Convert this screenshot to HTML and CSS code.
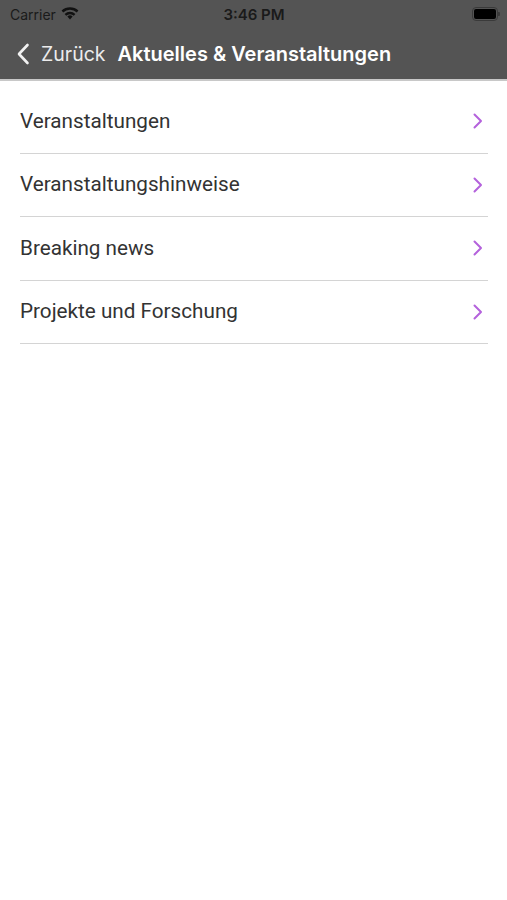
FILE: index.html
```html
<!DOCTYPE html>
<html lang="de">
<head>
  <meta charset="UTF-8">
  <title>Aktuelles &amp; Veranstaltungen</title>
  <link rel="stylesheet" href="styles.css">
</head>
<body>
  <header class="topbar">
    <!-- Statusleiste -->
    <div class="status">
      <div class="status-left">
        <span>Carrier</span>
        <svg class="wifi" width="18" height="13" viewBox="0 0 18 13">
          <path d="M9 12.5l2.6-3.1a4 4 0 0 0-5.2 0z" fill="#111"/>
          <path d="M3.6 6.9a8 8 0 0 1 10.8 0l-1.6 1.9a5.5 5.5 0 0 0-7.6 0z" fill="#111"/>
          <path d="M0.6 3.5a12.5 12.5 0 0 1 16.8 0l-1.6 1.9a10 10 0 0 0-13.6 0z" fill="#111"/>
        </svg>
      </div>
      <div class="status-time">3:46 PM</div>
      <div class="status-right">
        <span class="battery"><span class="battery-level"></span></span>
      </div>
    </div>

    <!-- Navigation -->
    <nav class="navbar">
      <a class="back" href="#">
        <svg width="14" height="22" viewBox="0 0 14 22">
          <path d="M11.5 2L3 11l8.5 9" fill="none" stroke="#f2f2f2" stroke-width="2.6" stroke-linecap="round" stroke-linejoin="round"/>
        </svg>
        <span>Zurück</span>
      </a>
      <h1 class="title">Aktuelles &amp; Veranstaltungen</h1>
    </nav>
  </header>

  <ul class="menu">
    <li><span>Veranstaltungen</span><svg class="chevron" width="10" height="16" viewBox="0 0 10 16"><path d="M1.5 1.5L8 8l-6.5 6.5" fill="none" stroke="#b462dc" stroke-width="2" stroke-linecap="round" stroke-linejoin="round"/></svg></li>
    <li><span>Veranstaltungshinweise</span><svg class="chevron" width="10" height="16" viewBox="0 0 10 16"><path d="M1.5 1.5L8 8l-6.5 6.5" fill="none" stroke="#b462dc" stroke-width="2" stroke-linecap="round" stroke-linejoin="round"/></svg></li>
    <li><span>Breaking news</span><svg class="chevron" width="10" height="16" viewBox="0 0 10 16"><path d="M1.5 1.5L8 8l-6.5 6.5" fill="none" stroke="#b462dc" stroke-width="2" stroke-linecap="round" stroke-linejoin="round"/></svg></li>
    <li><span>Projekte und Forschung</span><svg class="chevron" width="10" height="16" viewBox="0 0 10 16"><path d="M1.5 1.5L8 8l-6.5 6.5" fill="none" stroke="#b462dc" stroke-width="2" stroke-linecap="round" stroke-linejoin="round"/></svg></li>
  </ul>
</body>
</html>
```

FILE: styles.css
```css
body {
  margin: 0;
  font-family: Roboto, "Liberation Sans", sans-serif;
  background: #fff;
}

.topbar {
  background-color: #545454;
  border-bottom: 2px solid #c8c8c8;
}

.status {
  height: 28px;
  display: flex;
  align-items: center;
  justify-content: space-between;
  padding: 0 9px 0 10px;
  font-family: Inter, "Liberation Sans", sans-serif;
  color: #1a1a1a;
  font-size: 14px;
}
.status-left {
  display: flex;
  align-items: center;
  gap: 5px;
  width: 120px;
}
.wifi {
  margin-top: -2px;
}
.status-time {
  font-weight: 600;
  font-size: 15px;
}
.status-right {
  width: 120px;
  display: flex;
  justify-content: flex-end;
}
.battery {
  width: 22px;
  height: 10px;
  border: 1px solid #3a3a3a;
  border-radius: 4px;
  padding: 1px;
  position: relative;
}
.battery::after {
  content: "";
  position: absolute;
  right: -3px;
  top: 4px;
  width: 2px;
  height: 4px;
  background: #3a3a3a;
  border-radius: 0 1px 1px 0;
}
.battery-level {
  display: block;
  height: 100%;
  background: #000;
  border-radius: 2px;
}

.navbar {
  height: 51px;
  display: flex;
  align-items: center;
  padding-left: 16px;
  font-family: Inter, "Liberation Sans", sans-serif;
}
.back {
  display: flex;
  align-items: center;
  gap: 11px;
  color: #ececec;
  text-decoration: none;
  font-size: 19.5px;
}
.title {
  margin: 0 0 0 12px;
  color: #fff;
  font-size: 20px;
  font-weight: 600;
}

.menu {
  list-style-type: none;
  margin: 0;
  padding: 9px 19px 0 20px;
}
.menu li {
  height: 62.5px;
  display: flex;
  align-items: center;
  justify-content: space-between;
  border-bottom: 1px solid #d4d4d4;
  font-size: 20.7px;
  color: #333;
  cursor: pointer;
}
.menu li span {
  margin-top: -1px;
}
.chevron {
  margin-right: 5px;
}
```
